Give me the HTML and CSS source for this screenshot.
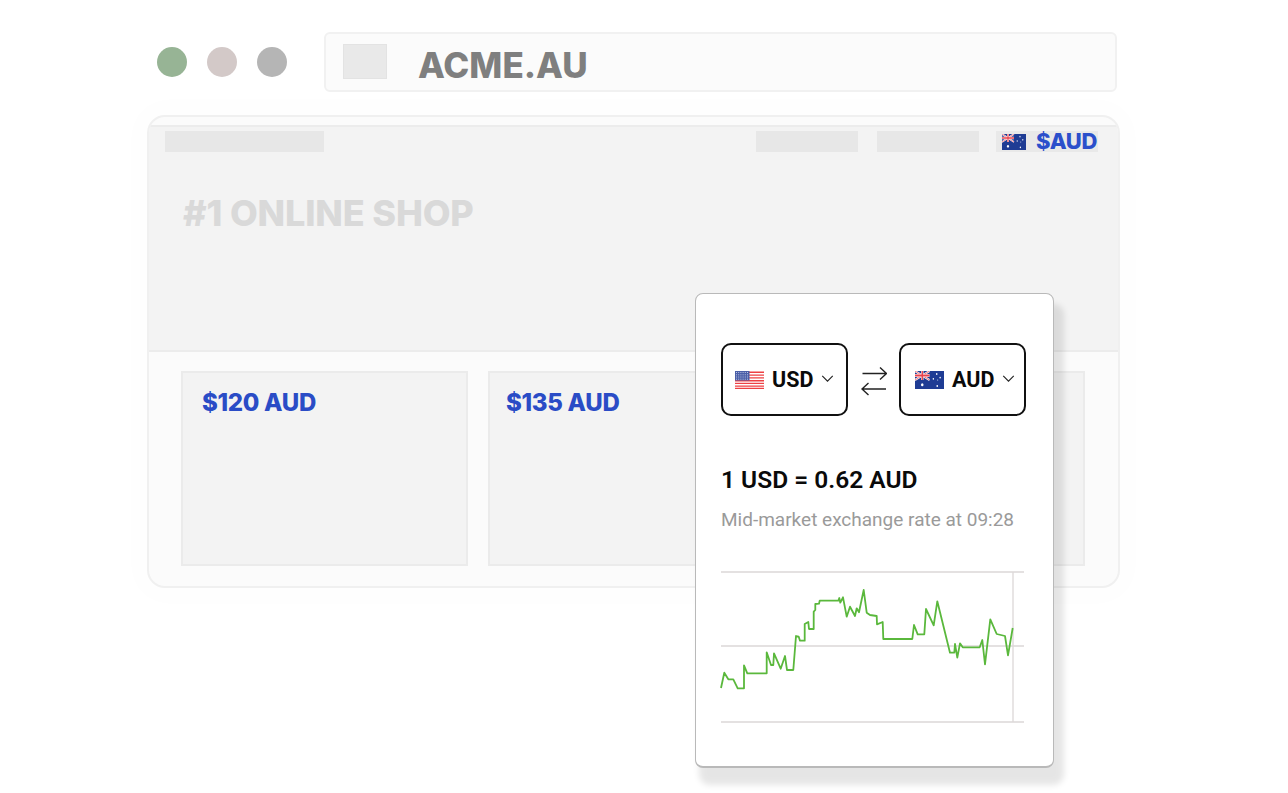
FILE: index.html
```html
<!DOCTYPE html>
<html lang="en">
<head>
<meta charset="utf-8">
<title>ACME.AU currency converter</title>
<link rel="stylesheet" href="styles.css">
</head>
<body>
<svg class="defs" width="0" height="0" aria-hidden="true">
  <symbol id="flag-au" viewBox="0 0 60 30" preserveAspectRatio="none">
    <rect width="60" height="30" fill="#1f3c94"/>
    <path d="M0 0L30 15M30 0L0 15" stroke="#fff" stroke-width="3.4"/>
    <path d="M0 0L30 15M30 0L0 15" stroke="#e8414c" stroke-width="1.3"/>
    <path d="M15 0V15M0 7.5H30" stroke="#fff" stroke-width="5"/>
    <path d="M15 0V15M0 7.5H30" stroke="#e8414c" stroke-width="3"/>
    <g fill="#fff">
      <circle cx="15" cy="23" r="2.6"/>
      <circle cx="45" cy="5" r="1.5"/>
      <circle cx="38" cy="13" r="1.5"/>
      <circle cx="52" cy="11" r="1.5"/>
      <circle cx="46" cy="25" r="1.7"/>
      <circle cx="47" cy="15" r="1"/>
    </g>
  </symbol>
  <symbol id="flag-us" viewBox="0 0 29 18" preserveAspectRatio="none">
    <rect width="29" height="18" fill="#fff"/>
    <path d="M0 1.3H29M0 4.1H29M0 6.9H29M0 9.7H29M0 12.4H29M0 15.1H29M0 17.4H29" stroke="#ee4144" stroke-width="1.4"/>
    <rect width="14.5" height="9.5" fill="#4a5fa8"/>
    <path d="M1 1.5H14M1 3.8H14M1 6H14M1 8.2H14" stroke="#c9d0e6" stroke-width=".9" stroke-dasharray="1 1.2"/>
  </symbol>
</svg>

<main class="stage">
  <header class="chrome">
    <div class="dots">
      <span class="dot dot-green"></span>
      <span class="dot dot-rose"></span>
      <span class="dot dot-grey"></span>
    </div>
    <div class="address">
      <span class="favicon"></span>
      <span class="domain">ACME.AU</span>
    </div>
  </header>

  <section class="window">
    <div class="hero">
      <nav class="nav">
        <span class="bar bar-logo"></span>
        <span class="nav-right">
          <span class="bar bar-link"></span>
          <span class="bar bar-link"></span>
          <span class="locale">
            <svg class="locale-flag"><use href="#flag-au"/></svg>
            <span class="locale-text">$AUD</span>
          </span>
        </span>
      </nav>
      <h1 class="headline">#1 ONLINE SHOP</h1>
    </div>
    <div class="products">
      <article class="product"><span class="price">$120 AUD</span></article>
      <article class="product"><span class="price price-b">$135 AUD</span></article>
      <article class="product"></article>
    </div>
  </section>

  <aside class="converter">
    <div class="pickers">
      <div class="picker">
        <svg class="flag"><use href="#flag-us"/></svg>
        <span class="code">USD</span>
        <svg class="chevron" viewBox="0 0 14 8"><path d="M1 1l6 6 6-6"/></svg>
      </div>
      <svg class="swap" viewBox="0 0 26 29"><path d="M1.500 6.500H25.500M19 .5L25.500 6.500L19 12.500M25 22H1M7.500 16L1 22L7.500 28"/></svg>
      <div class="picker picker-to">
        <svg class="flag"><use href="#flag-au"/></svg>
        <span class="code">AUD</span>
        <svg class="chevron" viewBox="0 0 14 8"><path d="M1 1l6 6 6-6"/></svg>
      </div>
    </div>
    <p class="rate">1 USD = 0.62 AUD</p>
    <p class="note">Mid-market exchange rate at 09:28</p>
    <svg class="chart" viewBox="710 560 320 170">
      <path class="grid" d="M721 572H1024M721 646H1024M721 722H1024M1013 572V722"/>
      <polyline class="line" points="721,688 724.3,672.7 728.3,679.3 733.3,679.3 737.7,688.3 744,688.3 744,665.3 747.3,673.3 766.7,673.3 766.7,652.3 771,665 773.3,665 774,653.3 780.700,668.7 785,656 787,670 793.3,670 796,636 798.7,636.7 800,640.7 804.7,640.7 804.7,624 808.3,622 809,629 813.7,629 813.7,611.7 815.3,610 815.3,604 819,603.7 819.7,600.7 838.3,600.7 839.3,598 840.3,602.7 843,597.3 846.7,616.7 850,606.7 855,616 856.7,608.3 859,612.3 863.7,590 866.7,612.7 870,615 876.7,616 877,624.3 882.7,622 883.3,639 912.3,639 914,625 917.7,634.3 924.3,634.3 926,609 933.7,625.3 937.3,601.3 950,652.7 954.3,652.7 955,644 957.3,657.7 960,643.3 962.7,647.3 979.7,647.3 982.3,640 985,664.3 990.3,619.3 996.7,634 1005,636 1008,655.3 1012.7,628"/>
    </svg>
  </aside>
</main>
</body>
</html>
```

FILE: styles.css
```css
* { box-sizing: border-box; }

html, body {
  margin: 0;
  background: #fff;
}

.defs { position: absolute; }

.stage {
  position: relative;
  width: 1288px;
  height: 793px;
  overflow: hidden;
  padding-top: 32px;
  font-family: Inter, "Liberation Sans", sans-serif;
}

.chrome {
  display: flex;
  align-items: center;
  margin-left: 157px;
  width: 960px;
}

.dots {
  display: flex;
  gap: 20px;
  margin-right: 37px;
}

.dot {
  width: 30px;
  height: 30px;
  border-radius: 50%;
}

.dot-green { background: #97b495; }
.dot-rose { background: #d3c9c8; }
.dot-grey { background: #b5b5b5; }

.address {
  flex: 1;
  height: 60px;
  display: flex;
  align-items: center;
  padding-left: 17px;
  background: #fbfbfb;
  border: 2px solid #f1f1f1;
  border-radius: 6px;
}

.favicon {
  width: 44px;
  height: 35px;
  margin-top: -2px;
  background: #e9e9e9;
  border: 1px solid #e3e3e3;
}

.domain {
  margin: 6px 0 0 31px;
  font-size: 35px;
  font-weight: 800;
  color: #7f7f7f;
}

.window {
  width: 973px;
  height: 473px;
  margin: 23px 0 0 147px;
  padding-top: 8px;
  background: #fbfbfb;
  border: 2px solid #f0f0f0;
  border-radius: 18px;
  overflow: hidden;
  box-shadow: 0 0 24px 16px rgba(0, 0, 0, 0.008);
}

.hero {
  height: 227px;
  padding: 4px 20px 0 16px;
  background: #f3f3f3;
  border-top: 2px solid #ececec;
  border-bottom: 2px solid #ececec;
}

.nav {
  display: flex;
  justify-content: space-between;
}

.bar {
  display: block;
  height: 21px;
  background: #e7e7e7;
}

.bar-logo { width: 159px; }
.bar-link { width: 102px; }

.nav-right {
  display: flex;
  gap: 19px;
}

.locale {
  width: 102px;
  height: 21px;
  margin-left: -2px;
  display: flex;
  align-items: center;
  gap: 10px;
  padding-left: 6px;
  background: #e9e9e9;
}

.locale-flag {
  width: 24px;
  height: 16px;
  flex: none;
}

.locale-text {
  margin-top: -2px;
  font-size: 22px;
  font-weight: 800;
  letter-spacing: -0.35px;
  color: #2b4fcb;
}

.headline {
  margin: 40px 0 0 18px;
  font-size: 36px;
  line-height: 42px;
  font-weight: 800;
  letter-spacing: -0.15px;
  color: #d9d9d9;
}

.products {
  display: grid;
  grid-template-columns: 287px 287px 1fr;
  gap: 20px;
  padding: 19px 33px 0 32px;
}

.product {
  height: 195px;
  padding: 15px 0 0 19px;
  background: #f3f3f3;
  border: 2px solid #ebebeb;
}

.price {
  font-size: 24px;
  line-height: 30px;
  font-weight: 800;
  letter-spacing: -0.3px;
  color: #2a4cc6;
}

.price-b { margin-left: -3px; }

.converter {
  position: absolute;
  left: 695px;
  top: 293px;
  width: 359px;
  height: 475px;
  padding: 49px 0 0 25px;
  background: #fff;
  border: 1px solid #b9b9b9;
  border-bottom-width: 2px;
  border-radius: 8px;
  box-shadow: 7px 14px 6px 3px rgba(0, 0, 0, 0.1);
  font-family: Roboto, "Liberation Sans", sans-serif;
}

.pickers {
  display: flex;
  align-items: center;
}

.picker {
  width: 127px;
  height: 73px;
  display: flex;
  align-items: center;
  padding-left: 12px;
  border: 2px solid #111;
  border-radius: 10px;
}

.picker-to { padding-left: 14px; }

.flag {
  width: 29px;
  height: 18px;
  flex: none;
}

.code {
  margin-left: 8px;
  font-size: 21.500px;
  font-weight: 700;
  color: #0a0a0a;
}

.chevron {
  width: 13px;
  height: 7px;
  margin: -2px 0 0 8px;
  fill: none;
  stroke: #222;
  stroke-width: 1.3;
}

.swap {
  width: 26px;
  height: 29px;
  flex: none;
  margin: 4px 12px 0 13px;
  fill: none;
  stroke: #222;
  stroke-width: 1.4;
}

.rate {
  margin: 50px 0 0 0;
  font-size: 24.500px;
  line-height: 28px;
  font-weight: 600;
  color: #0a0a0a;
}

.note {
  margin: 15px 0 0 0;
  font-size: 19px;
  line-height: 22px;
  color: #9a9a9a;
}

.chart {
  display: block;
  width: 320px;
  height: 170px;
  margin: 29px 0 0 -11px;
}

.grid {
  fill: none;
  stroke: #dcd8d8;
  stroke-width: 1.300;
}

.line {
  fill: none;
  stroke: #5ab83c;
  stroke-width: 1.800;
  stroke-linejoin: round;
}
```
